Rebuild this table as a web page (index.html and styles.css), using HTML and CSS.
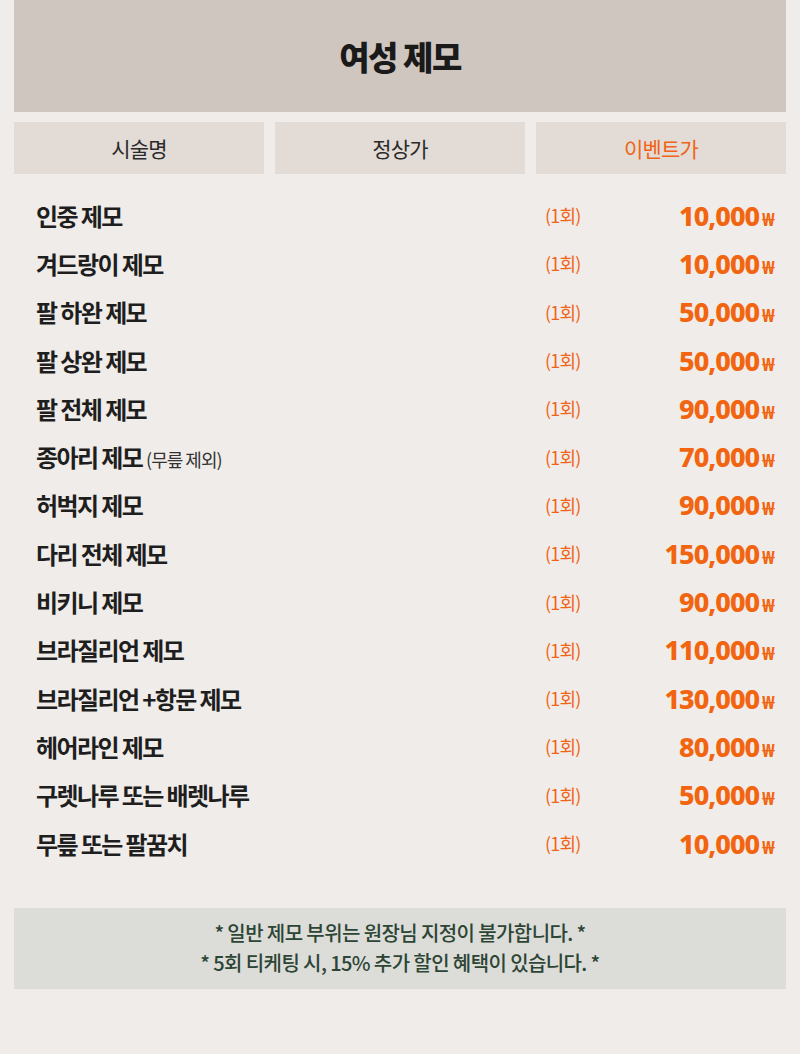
FILE: index.html
```html
<!DOCTYPE html>
<html>
<head>
  <meta charset="UTF-8">
  <title>여성 제모</title>
  <link rel="stylesheet" href="styles.css">
</head>
<body>

  <div class="title">여성 제모</div>

  <div class="head">
    <div class="cell">시술명</div>
    <div class="cell">정상가</div>
    <div class="cell event">이벤트가</div>
  </div>

  <div class="list">
    <div class="row"><span class="name">인중 제모</span><span class="count">(1회)</span><span class="price">10,000<small>₩</small></span></div>
    <div class="row"><span class="name">겨드랑이 제모</span><span class="count">(1회)</span><span class="price">10,000<small>₩</small></span></div>
    <div class="row"><span class="name">팔 하완 제모</span><span class="count">(1회)</span><span class="price">50,000<small>₩</small></span></div>
    <div class="row"><span class="name">팔 상완 제모</span><span class="count">(1회)</span><span class="price">50,000<small>₩</small></span></div>
    <div class="row"><span class="name">팔 전체 제모</span><span class="count">(1회)</span><span class="price">90,000<small>₩</small></span></div>
    <div class="row"><span class="name">종아리 제모 <em>(무릎 제외)</em></span><span class="count">(1회)</span><span class="price">70,000<small>₩</small></span></div>
    <div class="row"><span class="name">허벅지 제모</span><span class="count">(1회)</span><span class="price">90,000<small>₩</small></span></div>
    <div class="row"><span class="name">다리 전체 제모</span><span class="count">(1회)</span><span class="price">150,000<small>₩</small></span></div>
    <div class="row"><span class="name">비키니 제모</span><span class="count">(1회)</span><span class="price">90,000<small>₩</small></span></div>
    <div class="row"><span class="name">브라질리언 제모</span><span class="count">(1회)</span><span class="price">110,000<small>₩</small></span></div>
    <div class="row"><span class="name">브라질리언 +항문 제모</span><span class="count">(1회)</span><span class="price">130,000<small>₩</small></span></div>
    <div class="row"><span class="name">헤어라인 제모</span><span class="count">(1회)</span><span class="price">80,000<small>₩</small></span></div>
    <div class="row"><span class="name">구렛나루 또는 배렛나루</span><span class="count">(1회)</span><span class="price">50,000<small>₩</small></span></div>
    <div class="row"><span class="name">무릎 또는 팔꿈치</span><span class="count">(1회)</span><span class="price">10,000<small>₩</small></span></div>
  </div>

  <div class="notice">
    * 일반 제모 부위는 원장님 지정이 불가합니다. *<br>
    * 5회 티케팅 시, 15% 추가 할인 혜택이 있습니다. *
  </div>

</body>
</html>
```

FILE: styles.css
```css
body {
  margin: 0;
  padding: 0 14px;
  background-color: #f0ece9;
  color: #1e1e1e;
  font-family: "Noto Sans CJK KR", "Noto Sans", sans-serif;
}
.title {
  height: 112px;
  background-color: #cfc6c0;
  display: flex;
  align-items: center;
  justify-content: center;
  font-size: 33px;
  font-weight: 900;
  letter-spacing: -1.5px;
  color: #1a1a1a;
}
.head {
  display: grid;
  grid-template-columns: 1fr 1fr 1fr;
  gap: 11px;
  margin-top: 10px;
}
.cell {
  height: 52px;
  background-color: #e3dcd6;
  display: flex;
  align-items: center;
  justify-content: center;
  font-size: 21px;
  letter-spacing: -0.8px;
  color: #2a2a2a;
}
.cell.event {
  color: #f06418;
}
.list {
  padding: 17px 11px 0 22px;
}
.row {
  display: grid;
  grid-template-columns: 509px 1fr auto;
  align-items: center;
  height: 48.3px;
}
.name {
  font-size: 24px;
  font-weight: 700;
  letter-spacing: -1.6px;
  color: #1e1e1e;
}
.name em {
  font-style: normal;
  font-weight: 400;
  font-size: 18px;
  letter-spacing: -1px;
  color: #333;
}
.count {
  font-size: 18px;
  color: #f06418;
  letter-spacing: -0.8px;
}
.price {
  font-family: "Noto Sans", sans-serif;
  font-size: 27px;
  font-weight: 800;
  letter-spacing: -1px;
  color: #f26510;
}
.price small {
  font-size: 17px;
  font-weight: 800;
  margin-left: 3px;
  letter-spacing: 0;
}
.notice {
  margin-top: 41px;
  background-color: #dcdcd8;
  padding: 10px 0 11px;
  text-align: center;
  font-size: 20px;
  font-weight: 500;
  line-height: 30px;
  letter-spacing: -0.6px;
  color: #2c4535;
}
```
